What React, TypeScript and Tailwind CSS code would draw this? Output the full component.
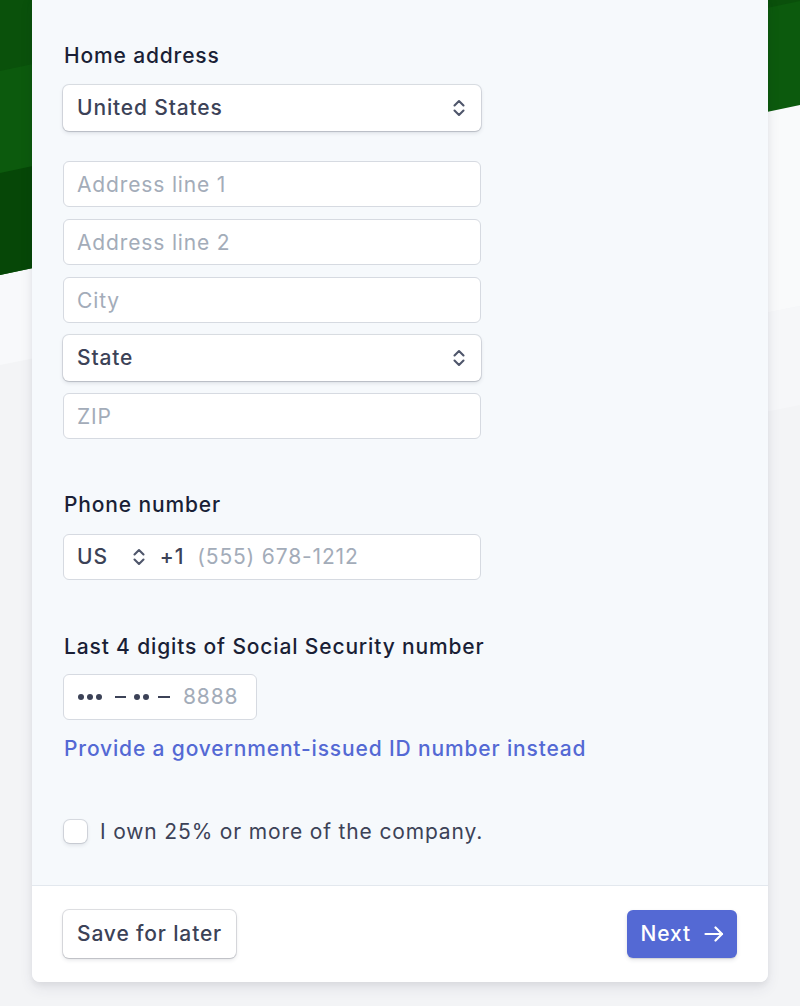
function UpDown({ className = "" }: { className?: string }) {
  return (
    <svg
      viewBox="0 0 14 20"
      className={className}
      fill="none"
      stroke="currentColor"
      strokeWidth={2.1}
      strokeLinecap="round"
      strokeLinejoin="round"
    >
      <path d="M2.5 7.5 L7 3 L11.5 7.5" />
      <path d="M2.5 12.5 L7 17 L11.5 12.5" />
    </svg>
  );
}

function Arrow() {
  return (
    <svg
      viewBox="0 0 20 16"
      className="h-[16px] w-[20px]"
      fill="none"
      stroke="currentColor"
      strokeWidth={2.2}
      strokeLinecap="round"
      strokeLinejoin="round"
    >
      <path d="M1.5 8 H18" />
      <path d="M11.5 1.5 L18 8 L11.5 14.5" />
    </svg>
  );
}

function Backdrop() {
  return (
    <svg
      className="absolute left-0 top-0 h-[1006px] w-[800px]"
      viewBox="0 0 800 1006"
      preserveAspectRatio="none"
    >
      <rect x="0" y="0" width="800" height="1006" fill="#f3f4f6" />
      {/* light stripes */}
      <polygon points="0,275 40,267 40,357 0,365" fill="#f8f9fb" />
      <polygon points="760,113 800,105 800,306 760,314" fill="#f9fafb" />
      <polygon points="760,314 800,306 800,405 760,413" fill="#f6f7f9" />
      {/* green stripes */}
      <polygon points="0,0 800,0 800,105 0,275" fill="#0c5a0d" />
      <polygon points="0,0 334,0 0,71" fill="#0a510b" />
      <polygon points="0,173 400,88 400,190 0,275" fill="#064707" />
      <polygon points="500,0 800,0 800,1 500,65" fill="#0a500b" />
    </svg>
  );
}

const text = "text-[21px] tracking-[0.85px]";
const label = `${text} font-medium leading-6 text-[#1a1f36]`;
const field = `h-[46px] rounded-md bg-white px-[13px] ${text} text-[#3c4257] outline-none`;
const inputBox = `${field} w-[418px] border border-[#d6dae1] placeholder:text-[#a3acb9]`;
const selectBox = `${field} w-[418px] flex items-center justify-between pl-[14px] pr-[15px] shadow-[0_0_0_1px_rgba(60,66,87,0.14),0_2px_4px_rgba(60,66,87,0.14),0_1px_1px_rgba(0,0,0,0.08)]`;

function Dots({ n, className = "" }: { n: number; className?: string }) {
  return (
    <span className={`flex shrink-0 gap-[3px] ${className}`}>
      {Array.from({ length: n }).map((_, i) => (
        <span
          key={i}
          className="block h-[6px] w-[6px] shrink-0 rounded-full bg-[#3c4257]"
        />
      ))}
    </span>
  );
}

function Dash({ className = "" }: { className?: string }) {
  return <span className={`block h-[2px] shrink-0 bg-[#3c4257] ${className}`} />;
}

export default function App() {
  return (
    <div
      className="relative h-[1006px] w-[800px] overflow-hidden"
      style={{ fontFamily: "Inter, 'Noto Sans', sans-serif" }}
    >
      <Backdrop />
      <div className="relative px-8">
        <div className="-mt-2 overflow-hidden rounded-lg bg-[#f6f9fc] shadow-[0_7px_14px_rgba(50,50,93,0.08),0_3px_6px_rgba(0,0,0,0.06)]">
          <div className="pb-[37px] pl-[31px] pr-8 pt-[52px]">
            {/* Home address */}
            <div className={`${label} pl-px`}>Home address</div>
            <div className="mt-[17px] flex flex-col">
              <div className={selectBox}>
                <span className="font-medium">United States</span>
                <UpDown className="h-[20px] w-[14px] text-[#4f566b]" />
              </div>
              <div className="mt-[30px] flex flex-col gap-[12px]">
                <input className={inputBox} placeholder="Address line 1" />
                <input className={inputBox} placeholder="Address line 2" />
                <input className={inputBox} placeholder="City" />
                <div className={selectBox}>
                  <span className="font-medium">State</span>
                  <UpDown className="h-[20px] w-[14px] text-[#4f566b]" />
                </div>
                <input className={inputBox} placeholder="ZIP" />
              </div>
            </div>

            {/* Phone */}
            <div className={`${label} mt-[54px] pl-px`}>Phone number</div>
            <div
              className={`${field} mt-[17px] flex w-[418px] items-center border border-[#d6dae1]`}
            >
              <span className="font-medium">US</span>
              <UpDown className="ml-[24px] h-[20px] w-[14px] text-[#4f566b]" />
              <span className="ml-[14px] font-medium">+1</span>
              <span className="ml-[13px] text-[#a3acb9]">(555) 678-1212</span>
            </div>

            {/* SSN */}
            <div className={`${label} mt-[55px] pl-px`}>
              Last 4 digits of Social Security number
            </div>
            <div
              className={`${field} mt-[15px] flex w-[194px] items-center border border-[#d6dae1] pl-[14px]`}
            >
              <Dots n={3} />
              <Dash className="ml-[13px] w-[11px]" />
              <Dots n={2} className="ml-[8px]" />
              <Dash className="ml-[9px] w-[12px]" />
              <span className="ml-[13px] text-[#a3acb9]">8888</span>
            </div>
            <div className={`${text} mt-[17px] pl-px font-medium leading-6 text-[#5469d4]`}>
              Provide a government-issued ID number instead
            </div>

            {/* Checkbox */}
            <label className="mt-[55px] flex items-center gap-[13px] pl-px">
              <span className="h-[23px] w-[23px] rounded-[6px] bg-white shadow-[0_0_0_1px_rgba(60,66,87,0.16),0_2px_4px_rgba(60,66,87,0.14)]" />
              <span className={`${text} text-[#3c4257]`}>
                I own 25% or more of the company.
              </span>
            </label>
          </div>

          {/* Footer */}
          <div className="flex items-center justify-between border-t border-[#e3e8ee] bg-white pb-6 pl-[31px] pr-[31px] pt-6">
            <button className={`h-[48px] rounded-md bg-white px-[14px] ${text} font-medium text-[#3c4257] shadow-[0_0_0_1px_rgba(60,66,87,0.16),0_2px_4px_rgba(60,66,87,0.14),0_1px_1px_rgba(0,0,0,0.08)]`}>
              Save for later
            </button>
            <button className={`flex h-[48px] items-center gap-[13px] rounded-md bg-[#5469d4] pl-[14px] pr-[13px] ${text} font-medium text-white shadow-[0_2px_4px_rgba(60,66,87,0.14),0_1px_1px_rgba(0,0,0,0.1)]`}>
              Next
              <Arrow />
            </button>
          </div>
        </div>
      </div>
    </div>
  );
}
